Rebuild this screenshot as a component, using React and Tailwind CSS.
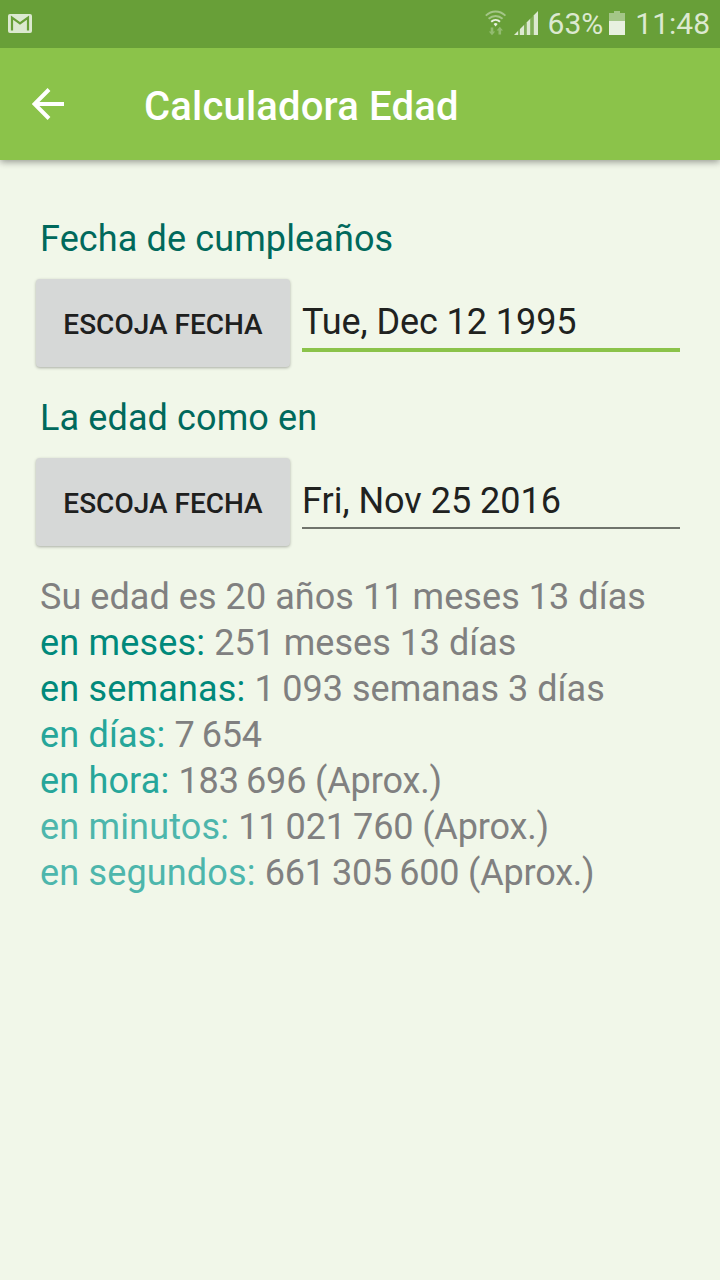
import React from "react";

const results = [
  {
    label: "en meses:",
    value: "251 meses 13 días",
    color: "text-[#00897b]",
    tracking: "tracking-normal",
  },
  {
    label: "en semanas:",
    value: "1\u2009093 semanas 3 días",
    color: "text-[#00897b]",
    tracking: "tracking-[0.04px]",
  },
  {
    label: "en días:",
    value: "7\u2009654",
    color: "text-[#26a69a]",
    tracking: "tracking-[-0.2px]",
  },
  {
    label: "en hora:",
    value: "183\u2009696 (Aprox.)",
    color: "text-[#26a69a]",
    tracking: "tracking-[-0.14px]",
  },
  {
    label: "en minutos:",
    value: "11\u2009021\u2009760 (Aprox.)",
    color: "text-[#4db6ac]",
    tracking: "tracking-[-0.14px]",
  },
  {
    label: "en segundos:",
    value: "661\u2009305\u2009600 (Aprox.)",
    color: "text-[#4db6ac]",
    tracking: "tracking-[-0.2px]",
  },
];

const MailIcon = () => (
  <svg width="24" height="19" viewBox="0 0 24 19" className="mb-[2px] shrink-0">
    <rect width="24" height="19" rx="2" fill="#dce9d0" />
    <path
      d="M4 16.5V3.7L12 9.5L20 3.7V16.5"
      fill="none"
      stroke="#689f38"
      strokeWidth="2.2"
    />
  </svg>
);

const WifiIcon = () => (
  <svg width="22" height="26" viewBox="0 0 22 26" fill="none" className="mb-[2px]">
    <g stroke="#a4c688" strokeWidth="1.9">
      <path d="M0.8 5.6C6.6 0.2 14.6 0.2 20.4 5.6" />
      <path d="M3.6 8.8C7.8 5 13.4 5 17.6 8.8" />
    </g>
    <path d="M6.2 11.8C8.8 9.4 12.4 9.4 15 11.8" stroke="#e8f1e0" strokeWidth="1.9" />
    <path d="M8.6 14Q10.6 12.2 12.6 14L10.6 16.4Z" fill="#e8f1e0" />
    {/* Traffic arrows */}
    <path
      d="M5.7 17.5H8.3V21.5H10.2L7 25.2L3.8 21.5H5.7ZM13.5 24.5H16.1V20.5H18L14.8 16.8L11.6 20.5H13.5Z"
      fill="#92bb70"
    />
  </svg>
);

const SignalIcon = () => (
  <svg width="25" height="24" viewBox="0 0 25 24" fill="#dce9d0">
    <path d="M0 24L4 20V24ZM6 24V18L10 14V24ZM12.5 24V11.5L16.5 7.5V24ZM19.5 24V4.5L24 0V24Z" />
    <path
      d="M4 20L6 18V24H4ZM10 14L12.5 11.5V24H10ZM16.5 7.5L19.5 4.5V24H16.5Z"
      fill="#7fae57"
    />
  </svg>
);

const BatteryIcon = () => (
  <svg width="16" height="24" viewBox="0 0 16 24">
    <path d="M5 0H11V2H16V10H0V2H5Z" fill="#a4c688" />
    <path d="M0 10H16V24H0Z" fill="#e8f1e0" />
  </svg>
);

const StatusBar = () => (
  <div className="relative z-10 flex h-12 items-center justify-between bg-[#689f38] pr-[10px] pl-2 text-[30px] leading-none text-[#dce9d0]">
    <MailIcon />
    <div className="flex items-center">
      <WifiIcon />
      <span className="mb-[2px] ml-[7px]">
        <SignalIcon />
      </span>
      <span className="ml-[9px]">63%</span>
      <span className="mb-[2px] ml-[6px]">
        <BatteryIcon />
      </span>
      <span className="ml-[10px]">11:48</span>
    </div>
  </div>
);

const AppBar = () => (
  <header className="relative flex h-28 items-center bg-[#8bc34a] pl-8 text-white shadow-[0_2px_7px_rgba(0,0,0,0.38)]">
    <svg width="32" height="32" viewBox="0 0 32 32" fill="none" aria-label="Atrás">
      <path d="M32 16H4M17 1.5L2.5 16L17 30.5" stroke="currentColor" strokeWidth="4" />
    </svg>
    <h1 className="ml-20 pt-[6px] text-[40px] leading-[48px] font-medium tracking-[0.18px]">
      Calculadora Edad
    </h1>
  </header>
);

const DateField = ({ label, value, active }) => (
  <section className="h-[179px]">
    <h2 className="pl-1 leading-[42px] tracking-[0.12px] text-[#00695c]">{label}</h2>
    <div className="mt-[19px] flex gap-3">
      <button className="h-22 w-[254px] rounded bg-[#d6d8d7] pt-1 text-[28px] font-medium text-[#1e201e] shadow-[0_1px_3px_rgba(0,0,0,0.3)]">
        ESCOJA FECHA
      </button>
      <div
        className={`flex-1 pt-[22px] text-[#20221f] ${
          active
            ? "h-[73px] border-b-4 border-[#8bc34a]"
            : "h-[71px] border-b-2 border-[#70746c]"
        }`}
      >
        <div className={`leading-[42px] ${active ? "tracking-[-0.07px]" : ""}`}>
          {value}
        </div>
      </div>
    </div>
  </section>
);

export default function App() {
  return (
    <div className="h-[1280px] w-[720px] overflow-hidden bg-[#f1f7e9] font-['Roboto',sans-serif]">
      <StatusBar />
      <AppBar />
      <main className="pt-[58px] pr-10 pl-9 text-[36px]">
        <DateField label="Fecha de cumpleaños" value="Tue, Dec 12 1995" active />
        <DateField label="La edad como en" value="Fri, Nov 25 2016" />
        <div className="-mt-[2px] pl-1 leading-[46px] whitespace-nowrap text-[#808080]">
          <p className="tracking-[0.06px]">Su edad es 20 años 11 meses 13 días</p>
          {results.map((row) => (
            <p key={row.label} className="tracking-[0.17px]">
              <span className={row.color}>{row.label}</span>{" "}
              <span className={row.tracking}>{row.value}</span>
            </p>
          ))}
        </div>
      </main>
    </div>
  );
}
